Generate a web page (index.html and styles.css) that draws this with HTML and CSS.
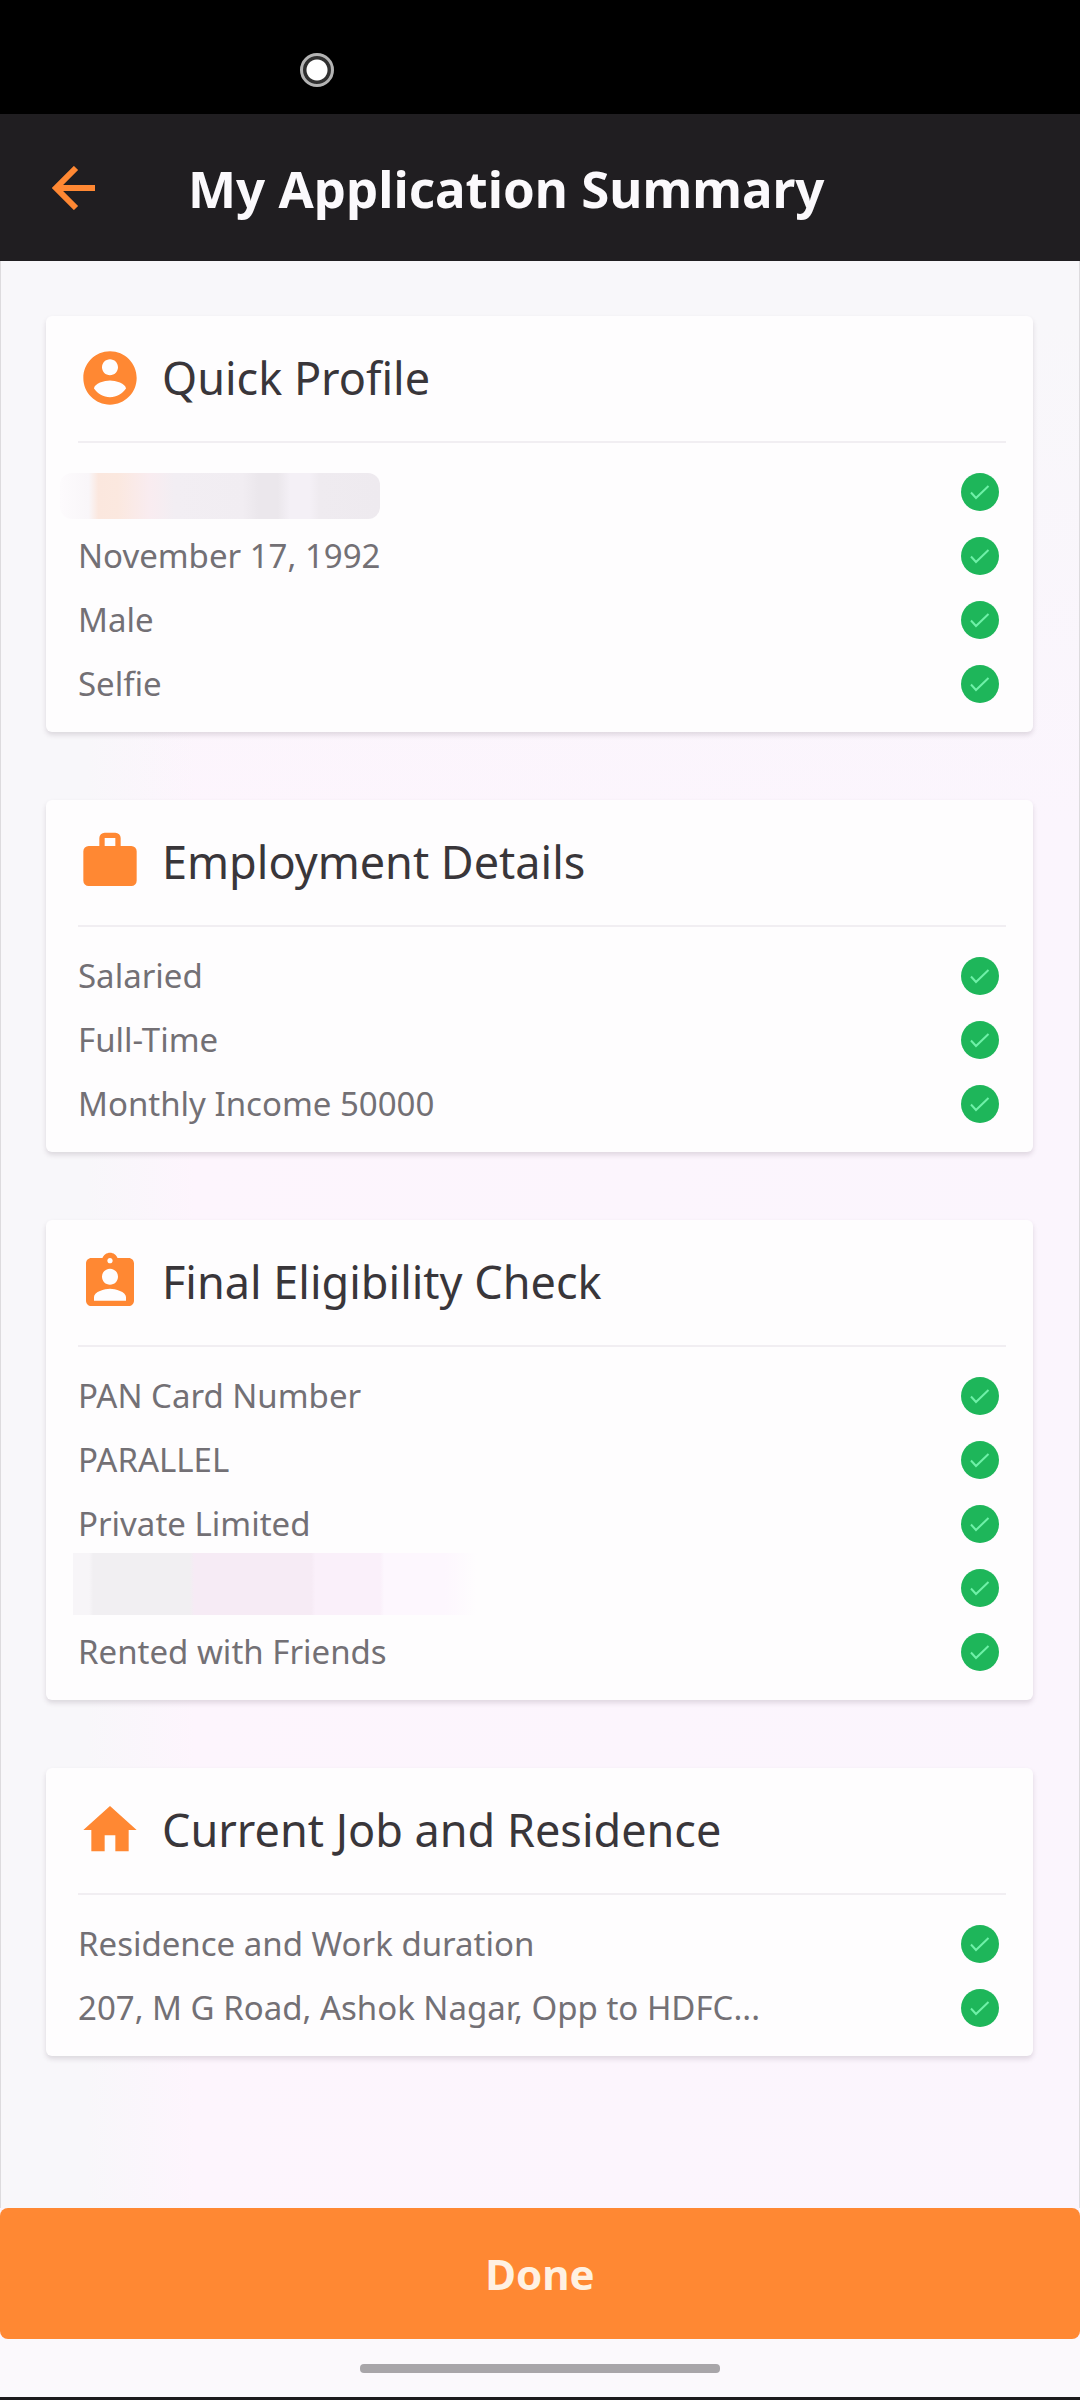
FILE: index.html
```html
<!DOCTYPE html>
<html lang="en">
<head>
<meta charset="utf-8">
<meta name="viewport" content="width=device-width, initial-scale=1">
<title>My Application Summary</title>
<link rel="stylesheet" href="styles.css">
</head>
<body>
<svg class="symbols" aria-hidden="true">
  <symbol id="check" viewBox="0 0 40 40">
    <circle cx="20" cy="20" r="19" fill="#1eb65a"/>
    <path d="M11 20.500l5 5.500 12.500-12" fill="none" stroke="#6ff0a8" stroke-width="2"/>
  </symbol>
</svg>
<div class="status"><span class="camera"></span></div>
<header class="appbar">
  <button class="back" type="button" aria-label="Back">
    <svg viewBox="0 0 44 44"><path d="M43 22H5M24 2L4 22l20 20" fill="none" stroke="#ff8833" stroke-width="6"/></svg>
  </button>
  <h1 class="title">My Application Summary</h1>
</header>
<main class="content">
  <section class="card">
    <div class="card-head">
      <svg class="icon" viewBox="0 0 24 24"><path d="M12 2C6.480 2 2 6.480 2 12s4.480 10 10 10 10-4.480 10-10S17.520 2 12 2zm0 3c1.660 0 3 1.340 3 3s-1.340 3-3 3-3-1.340-3-3 1.340-3 3-3zm0 14.200c-2.500 0-4.710-1.280-6-3.220.030-1.990 4-3.080 6-3.080 1.990 0 5.970 1.090 6 3.080-1.290 1.940-3.500 3.220-6 3.220z"/></svg>
      <h2 class="card-title">Quick Profile</h2>
    </div>
    <ul class="rows">
      <li class="row"><span class="redacted-name"></span><svg class="check"><use href="#check"/></svg></li>
      <li class="row"><span>November 17, 1992</span><svg class="check"><use href="#check"/></svg></li>
      <li class="row"><span>Male</span><svg class="check"><use href="#check"/></svg></li>
      <li class="row"><span>Selfie</span><svg class="check"><use href="#check"/></svg></li>
    </ul>
  </section>
  <section class="card">
    <div class="card-head">
      <svg class="icon" viewBox="0 0 24 24"><path fill-rule="evenodd" d="M10 1h4a2 2 0 0 1 2 2v3h4a2 2 0 0 1 2 2v11a2 2 0 0 1-2 2H4a2 2 0 0 1-2-2V8a2 2 0 0 1 2-2h4V3a2 2 0 0 1 2-2zm0 2v3h4V3z"/></svg>
      <h2 class="card-title">Employment Details</h2>
    </div>
    <ul class="rows">
      <li class="row"><span>Salaried</span><svg class="check"><use href="#check"/></svg></li>
      <li class="row"><span>Full-Time</span><svg class="check"><use href="#check"/></svg></li>
      <li class="row"><span>Monthly Income 50000</span><svg class="check"><use href="#check"/></svg></li>
    </ul>
  </section>
  <section class="card">
    <div class="card-head">
      <svg class="icon" viewBox="0 0 24 24"><path d="M19 3h-4.180C14.400 1.840 13.300 1 12 1s-2.400.840-2.820 2H5c-1.100 0-2 .900-2 2v14c0 1.100.900 2 2 2h14c1.100 0 2-.900 2-2V5c0-1.100-.900-2-2-2zm-7 0c.550 0 1 .450 1 1s-.450 1-1 1-1-.450-1-1 .450-1 1-1zm0 4c1.660 0 3 1.340 3 3s-1.340 3-3 3-3-1.340-3-3 1.340-3 3-3zm6 12H6v-1.400c0-2 4-3.100 6-3.100s6 1.100 6 3.100V19z"/></svg>
      <h2 class="card-title">Final Eligibility Check</h2>
    </div>
    <ul class="rows">
      <li class="row"><span>PAN Card Number</span><svg class="check"><use href="#check"/></svg></li>
      <li class="row"><span>PARALLEL</span><svg class="check"><use href="#check"/></svg></li>
      <li class="row"><span>Private Limited</span><svg class="check"><use href="#check"/></svg></li>
      <li class="row"><span class="redacted-number"></span><svg class="check"><use href="#check"/></svg></li>
      <li class="row"><span>Rented with Friends</span><svg class="check"><use href="#check"/></svg></li>
    </ul>
  </section>
  <section class="card">
    <div class="card-head">
      <svg class="icon" viewBox="0 0 24 24"><path d="M10 20v-6h4v6h5v-8h3L12 3 2 12h3v8z"/></svg>
      <h2 class="card-title">Current Job and Residence</h2>
    </div>
    <ul class="rows">
      <li class="row"><span>Residence and Work duration</span><svg class="check"><use href="#check"/></svg></li>
      <li class="row"><span>207, M G Road, Ashok Nagar, Opp to HDFC...</span><svg class="check"><use href="#check"/></svg></li>
    </ul>
  </section>
</main>
<footer class="footer">
  <button class="done" type="button">Done</button>
  <div class="navbar"><span class="pill"></span></div>
</footer>
</body>
</html>
```
FILE: styles.css
```css
* {
  box-sizing: border-box;
}

body {
  margin: 0;
  min-height: 100vh;
  display: flex;
  flex-direction: column;
  font-family: "Noto Sans", "Open Sans", sans-serif;
  color: #737075;
}

h1,
h2,
ul {
  margin: 0;
  padding: 0;
  font-weight: 400;
  list-style: none;
}

button {
  border: 0;
  padding: 0;
  font-family: inherit;
  cursor: pointer;
}

.symbols {
  position: absolute;
  width: 0;
  height: 0;
}

.status {
  height: 114px;
  padding: 53px 300px 0;
  background: #000;
}

.camera {
  display: block;
  width: 34px;
  height: 34px;
  border: 3px solid #b4b4b4;
  border-radius: 50%;
  background: radial-gradient(circle, #fff 10px, #303030 11px);
}

.appbar {
  height: 147px;
  padding: 0 52px;
  display: flex;
  align-items: center;
  gap: 92px;
  background: #201e21;
}

.back {
  width: 44px;
  height: 44px;
  background: none;
}

.back svg {
  display: block;
}

.title {
  color: #fbf9fc;
  font-size: 51px;
  font-weight: 700;
  line-height: 64px;
  white-space: nowrap;
}

.content {
  flex: 1;
  padding: 55px 46px 64px 45px;
  display: flex;
  flex-direction: column;
  gap: 68px;
  border: 1px solid #dddbde;
  border-width: 0 1px;
  background:
    linear-gradient(180deg, #f8f7fa 60px, rgba(248, 247, 250, 0) 560px),
    linear-gradient(90deg, #f8f7fa 8%, #fdf5fd 18%, #fbf5fd 100%);
}

.card {
  padding: 0 27px 16px 32px;
  border-radius: 6px;
  background: #fefdfe;
  box-shadow: 0 3px 5px rgba(60, 40, 60, 0.15);
}

.card-head {
  height: 127px;
  padding-bottom: 2px;
  display: flex;
  align-items: center;
  gap: 20px;
  border-bottom: 2px solid #f1eef2;
}

.icon {
  width: 64px;
  height: 64px;
  fill: #ff8833;
}

.card-title {
  color: #39363a;
  font-size: 45px;
  line-height: 64px;
}

.rows {
  padding: 17px 6px 0 0;
}

.row {
  height: 64px;
  display: flex;
  align-items: center;
  justify-content: space-between;
  font-size: 33px;
  line-height: 48px;
}

.check {
  flex: none;
  width: 40px;
  height: 40px;
}

.redacted-name {
  width: 320px;
  height: 46px;
  margin: 8px 0 0 -18px;
  border-radius: 12px;
  background: linear-gradient(90deg, #fdfbfd 0, #f9f6f9 9%, #fbe7de 12%, #fbe8df 18%, #f9ecf0 28%, #f2eef3 36%, #f1edf2 57%, #ebe7ec 62%, #ebe7ec 68%, #f4f0f6 72%, #f4f0f6 78%, #efebf0 81%, #eeeaef 100%);
}

.redacted-number {
  width: 404px;
  height: 62px;
  margin: 0 0 8px -5px;
  background: linear-gradient(90deg, #f7f5f8 0 4%, #f1eff2 5% 29%, #f6ebf5 30% 59%, #faf0fa 60% 76%, #fdf7fe 77% 92%, #fefdfe 100%);
}

.done {
  display: block;
  width: 100%;
  height: 131px;
  border-radius: 8px;
  background: #ff8833;
  color: #fff1e2;
  font-size: 42px;
  font-weight: 700;
}

.footer {
  background: #fbf5fd;
}

.navbar {
  height: 61px;
  padding-top: 25px;
  display: flex;
  justify-content: center;
  align-items: flex-start;
  background: #fbf9fc;
  border-bottom: 3px solid #1c1b1d;
}

.pill {
  width: 33.333%;
  height: 9px;
  border-radius: 4px;
  background: #a8a6a9;
}
```
